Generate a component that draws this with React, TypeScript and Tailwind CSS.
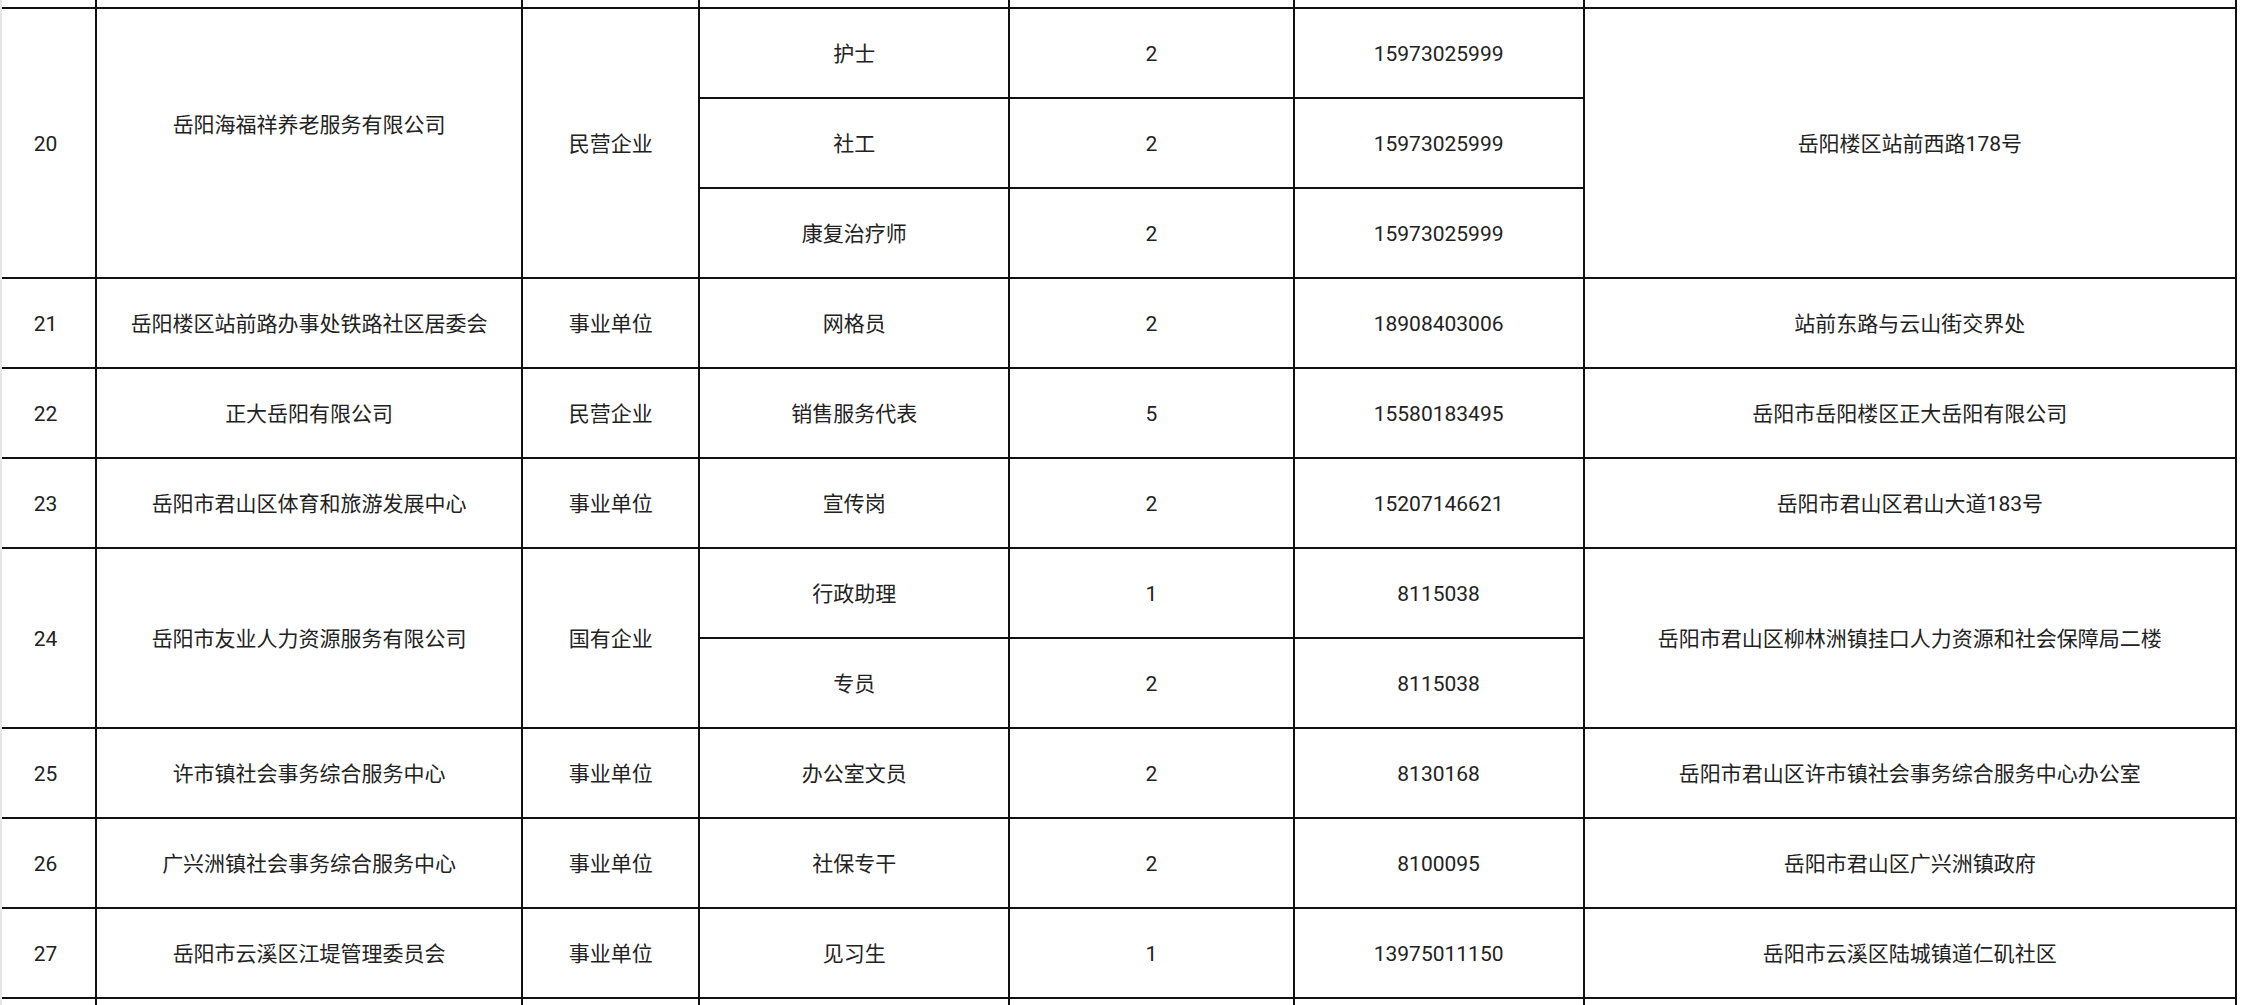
import React from 'react';

type Job = { title: string; count: string; phone: string };

type Unit = {
  no: string;
  name: string;
  kind: string;
  jobs: Job[];
  address: string;
  lift?: boolean;
};

const units: Unit[] = [
  {
    no: '20',
    name: '岳阳海福祥养老服务有限公司',
    kind: '民营企业',
    jobs: [
      { title: '护士', count: '2', phone: '15973025999' },
      { title: '社工', count: '2', phone: '15973025999' },
      { title: '康复治疗师', count: '2', phone: '15973025999' },
    ],
    address: '岳阳楼区站前西路178号',
    lift: true,
  },
  {
    no: '21',
    name: '岳阳楼区站前路办事处铁路社区居委会',
    kind: '事业单位',
    jobs: [{ title: '网格员', count: '2', phone: '18908403006' }],
    address: '站前东路与云山街交界处',
  },
  {
    no: '22',
    name: '正大岳阳有限公司',
    kind: '民营企业',
    jobs: [{ title: '销售服务代表', count: '5', phone: '15580183495' }],
    address: '岳阳市岳阳楼区正大岳阳有限公司',
  },
  {
    no: '23',
    name: '岳阳市君山区体育和旅游发展中心',
    kind: '事业单位',
    jobs: [{ title: '宣传岗', count: '2', phone: '15207146621' }],
    address: '岳阳市君山区君山大道183号',
  },
  {
    no: '24',
    name: '岳阳市友业人力资源服务有限公司',
    kind: '国有企业',
    jobs: [
      { title: '行政助理', count: '1', phone: '8115038' },
      { title: '专员', count: '2', phone: '8115038' },
    ],
    address: '岳阳市君山区柳林洲镇挂口人力资源和社会保障局二楼',
  },
  {
    no: '25',
    name: '许市镇社会事务综合服务中心',
    kind: '事业单位',
    jobs: [{ title: '办公室文员', count: '2', phone: '8130168' }],
    address: '岳阳市君山区许市镇社会事务综合服务中心办公室',
  },
  {
    no: '26',
    name: '广兴洲镇社会事务综合服务中心',
    kind: '事业单位',
    jobs: [{ title: '社保专干', count: '2', phone: '8100095' }],
    address: '岳阳市君山区广兴洲镇政府',
  },
  {
    no: '27',
    name: '岳阳市云溪区江堤管理委员会',
    kind: '事业单位',
    jobs: [{ title: '见习生', count: '1', phone: '13975011150' }],
    address: '岳阳市云溪区陆城镇道仁矶社区',
  },
];

const cell = 'border-2 border-[#111] text-center align-middle pb-0 pt-[3px]';

const EdgeRow = ({ top }: { top?: boolean }) => (
  <tr className="h-[8px]">
    <td className={`border-r-2 border-[#111] p-0 ${top ? 'border-b-2' : 'border-t-2 border-t-[#444]'}`} />
    {[0, 1, 2, 3, 4].map((i) => (
      <td
        key={i}
        className={`border-x-2 border-[#111] p-0 ${top ? 'border-b-2' : 'border-t-2 border-t-[#444]'}`}
      />
    ))}
    <td className={`border-l-2 border-r-2 border-[#111] p-0 ${top ? 'border-b-2' : 'border-t-2 border-t-[#444]'}`} />
  </tr>
);

export default function App() {
  return (
    <div
      className="w-[2242px] h-[1005px] overflow-hidden bg-white border-l-2 border-[#e6e6e6] text-[21px] text-[#222]"
      style={{ fontFamily: 'Roboto, "Noto Sans CJK SC", sans-serif' }}
    >
      <table className="border-collapse table-fixed w-[2235px]">
        <colgroup>
          <col className="w-[94px]" />
          <col className="w-[426px]" />
          <col className="w-[177px]" />
          <col className="w-[310px]" />
          <col className="w-[284px]" />
          <col className="w-[290px]" />
          <col className="w-[652px]" />
        </colgroup>
        <tbody>
          <EdgeRow top />
          {units.map((u) =>
            u.jobs.map((job, i) => (
              <tr key={u.no + job.title} className="h-[90px]">
                {i === 0 && (
                  <>
                    <td rowSpan={u.jobs.length} className={`${cell} border-l-0 pl-0 pr-[6px]`}>
                      {u.no}
                    </td>
                    <td rowSpan={u.jobs.length} className={`${cell} px-0`}>
                      <div className={u.lift ? 'pb-[38px]' : ''}>{u.name}</div>
                    </td>
                    <td rowSpan={u.jobs.length} className={`${cell} px-0`}>
                      {u.kind}
                    </td>
                  </>
                )}
                <td className={`${cell} px-0`}>{job.title}</td>
                <td className={`${cell} px-0`}>{job.count}</td>
                <td className={`${cell} px-0`}>{job.phone}</td>
                {i === 0 && (
                  <td rowSpan={u.jobs.length} className={`${cell} px-0`}>
                    {u.address}
                  </td>
                )}
              </tr>
            ))
          )}
          <EdgeRow />
        </tbody>
      </table>
    </div>
  );
}
